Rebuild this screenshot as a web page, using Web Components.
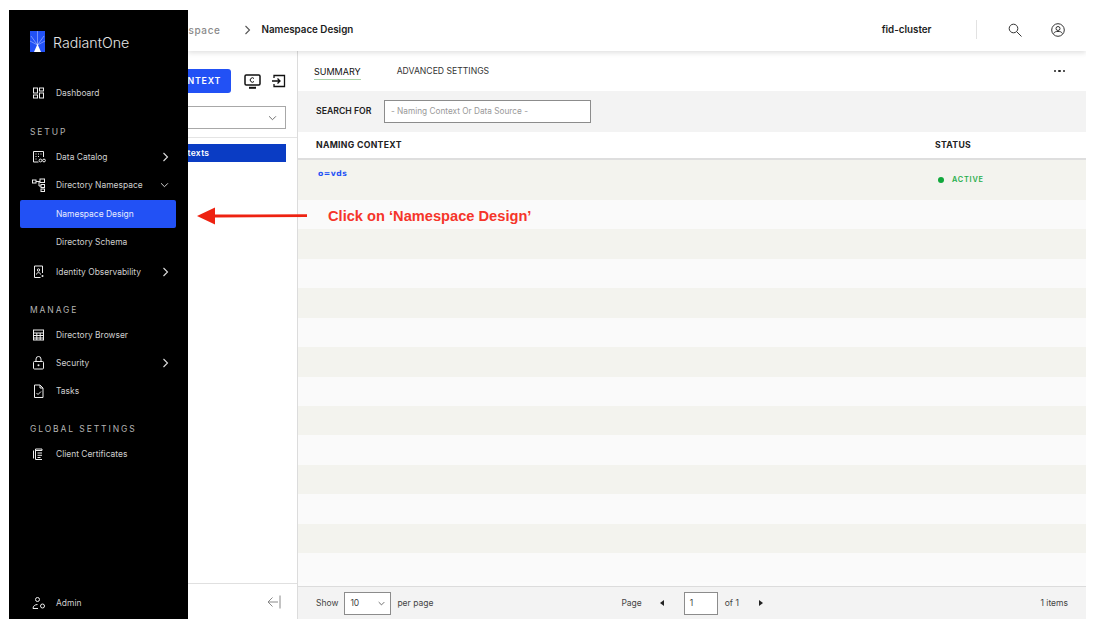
<!DOCTYPE html>
<html>
<head>
<meta charset="utf-8">
<title>Namespace Design</title>
<style>
  html, body { margin: 0; height: 629px; overflow: hidden; background: #fff; }
  body { font-family: Inter, "Liberation Sans", sans-serif; color: #1c1c1c; }
</style>
</head>
<body>
<app-shell>
  <side-nav slot="nav"></side-nav>
  <top-bar slot="top"></top-bar>
  <context-pane slot="left"></context-pane>
  <summary-pane slot="main"></summary-pane>
  <call-out slot="over">Click on ‘Namespace Design’</call-out>
</app-shell>

<script>
const icons = {
  dashboard: '<rect x="1.5" y="2" width="4" height="5"/><rect x="7.5" y="2" width="4" height="3"/><rect x="1.5" y="9" width="4" height="3"/><rect x="7.5" y="7" width="4" height="5"/>',
  catalog: '<path d="M6.500 12H1.500V1.500h10V7"/><path d="M3.500 4h1M6 4h1M8.500 4h1M3.500 6.500h1M6 6.500h1M3.500 9h1"/><circle cx="8.500" cy="10.500" r="1.400"/><circle cx="12" cy="10.500" r="1.400"/>',
  namespace: '<rect x=".5" y="2" width="3.500" height="3"/><rect x="8" y="1" width="4.500" height="3.500"/><rect x="9" y="6.500" width="3.500" height="3"/><rect x="9" y="11" width="3.500" height="2.500"/><path d="M4 3.500H8M7 3.500V8h2"/>',
  identity: '<path d="M10.500 8V1h-8v11.500h6"/><circle cx="6.500" cy="5" r="1.200"/><path d="M4.500 9.500c0-2.500 4-2.500 4 0"/><circle cx="10.500" cy="11" r="1" fill="currentColor" stroke="none"/>',
  table: '<rect x="1.500" y="2" width="10" height="10"/><path d="M1.500 5h10M1.500 7.500h10M1.500 10h10M4.800 5v7M8.200 5v7"/>',
  lock: '<rect x="1.500" y="5.500" width="10" height="7.500" rx="1"/><path d="M4 5.500V3a2.500 2.500 0 0 1 5 0v2.500"/><circle cx="6.500" cy="9.200" r="1" fill="currentColor" stroke="none"/>',
  tasks: '<path d="M2.500 1h5.500l3 3v9.500H2.500z"/><path d="M8 1v3h3M4.500 9l1.500 1.500L9 7.500"/>',
  certs: '<path d="M3.500 2V12.500h6.500M3.500 2h6.500v1.500H3.500M5.500 6h4.500M5.500 8.300h4.500M5.500 10.500h3M1.500 3.500v8"/>',
  admin: '<circle cx="5.500" cy="3.500" r="2"/><path d="M1 12.500c0-2.500 2-4 4.500-4M1 12.500h5"/><circle cx="10.500" cy="10" r="2"/>'
};
const chev = {
  right: '<svg width="7" height="10" viewBox="0 0 7 10" fill="none" stroke="currentColor" stroke-width="1.100"><path d="M1.500 1l4 4-4 4"/></svg>',
  down: '<svg width="9" height="6" viewBox="0 0 10 7" fill="none" stroke="currentColor" stroke-width="1.100"><path d="M1 1.500l4 4 4-4"/></svg>'
};

class AppShell extends HTMLElement {
  constructor() {
    super();
    this.attachShadow({mode: 'open'});
    this.shadowRoot.innerHTML = `
      <style>
        :host { display: block; position: relative; width: 1077px; height: 609px; margin: 10px 0 0 9px; overflow: hidden; }
        .frame { display: flex; height: 100%; }
        .right { flex: 1; display: flex; flex-direction: column; min-width: 0; }
        .body { flex: 1; display: flex; min-height: 0; }
      </style>
      <div class="frame">
        <slot name="nav"></slot>
        <div class="right">
          <slot name="top"></slot>
          <div class="body"><slot name="left"></slot><slot name="main"></slot></div>
        </div>
      </div>
      <slot name="over"></slot>`;
  }
}

class NavItem extends HTMLElement {
  constructor() {
    super();
    this.attachShadow({mode: 'open'});
    const icon = icons[this.getAttribute('icon')] || '';
    const c = this.getAttribute('chevron');
    this.shadowRoot.innerHTML = `
      <style>
        :host { display: flex; align-items: center; height: 28px; margin: 0 12px 0 11px; padding: 0 7px 0 12px;
                border-radius: 2px; font-size: 8.450px; color: #cfcfcf; }
        :host([active]) { background: #2251f5; color: #e8ecff; }
        .ic { width: 14px; height: 14px; margin-right: 10px; flex: none; color: #eee; }
        .lbl { flex: 1; white-space: nowrap; }
        .ch { display: flex; color: #ddd; }
      </style>
      <svg class="ic" viewBox="0 0 14 14" fill="none" stroke="currentColor" stroke-width="1">${icon}</svg>
      <span class="lbl"><slot></slot></span>
      <span class="ch">${c ? chev[c] : ''}</span>`;
  }
}

class NavSection extends HTMLElement {
  constructor() {
    super();
    this.attachShadow({mode: 'open'});
    this.shadowRoot.innerHTML = `
      <style>
        :host { display: block; height: 14px; line-height: 14px; margin: 17px 0 4px; padding-left: 21px;
                font-size: 8.500px; letter-spacing: 1.900px; color: #b4b4b4; }
      </style><slot></slot>`;
  }
}

class SideNav extends HTMLElement {
  constructor() {
    super();
    this.attachShadow({mode: 'open'});
    this.shadowRoot.innerHTML = `
      <style>
        :host { display: flex; flex-direction: column; flex: none; width: 178.500px; height: 100%; background: #000; position: relative; z-index: 3; }
        .logo { display: flex; align-items: center; height: 21px; margin: 21px 0 27px 21px; gap: 8px; color: #e6e6e6; font-size: 14.200px; font-weight: 300; }
        .logo span { padding-top: 2px; }
        .spacer { flex: 1; }
        .bottom { margin-bottom: 2px; }
      </style>
      <div class="logo">
        <svg width="15" height="21" viewBox="0 0 15 21">
          <rect width="15" height="21" fill="#2251f5"/>
          <path d="M7.500 14V0M7.500 14L1 5M7.500 14L14 5M7.500 14L0 10M7.500 14L15 10" stroke="#cfd9ff" stroke-width=".5"/>
          <path d="M7.500 13L11 21H4z" fill="#fff"/>
        </svg>
        <span>RadiantOne</span>
      </div>
      <nav-item icon="dashboard">Dashboard</nav-item>
      <nav-section style="margin-top:18px">SETUP</nav-section>
      <nav-item icon="catalog" chevron="right">Data Catalog</nav-item>
      <nav-item icon="namespace" chevron="down">Directory Namespace</nav-item>
      <nav-item active style="margin-top:1px">Namespace Design</nav-item>
      <nav-item>Directory Schema</nav-item>
      <nav-item icon="identity" chevron="right" style="margin-top:2px">Identity Observability</nav-item>
      <nav-section>MANAGE</nav-section>
      <nav-item icon="table">Directory Browser</nav-item>
      <nav-item icon="lock" chevron="right">Security</nav-item>
      <nav-item icon="tasks">Tasks</nav-item>
      <nav-section>GLOBAL SETTINGS</nav-section>
      <nav-item icon="certs">Client Certificates</nav-item>
      <div class="spacer"></div>
      <nav-item icon="admin" class="bottom">Admin</nav-item>`;
  }
}

class TopBar extends HTMLElement {
  constructor() {
    super();
    this.attachShadow({mode: 'open'});
    this.shadowRoot.innerHTML = `
      <style>
        :host { display: flex; align-items: center; box-sizing: border-box; height: 41px; padding-bottom: 2px; flex: none; background: #fff; box-shadow: 0 2px 5px rgba(0,0,0,.12); position: relative; z-index: 2; font-size: 10px; }
        .crumb { color: #8a8a8a; font-weight: 500; letter-spacing: .6px; margin-left: 1px; width: 55px; }
        .sep { width: 7px; height: 10px; margin-right: 11px; color: #555; display: flex; }
        .cur { font-weight: 600; color: #1c1c1c; font-size: 9.800px; }
        .cluster { margin-left: auto; font-weight: 600; font-size: 9.800px; }
        .div { width: 1px; height: 19px; background: #e2e2e2; margin: 0 31px 0 44.500px; }
        svg.i { color: #333; display: block; }
      </style>
      <span class="crumb">space</span>
      <span class="sep">${chev.right}</span>
      <span class="cur">Namespace Design</span>
      <span class="cluster">fid-cluster</span>
      <span class="div"></span>
      <svg class="i" width="14" height="14" viewBox="0 0 14 14" fill="none" stroke="currentColor" stroke-width="1"><circle cx="5.500" cy="5.500" r="4.300"/><path d="M8.700 8.700L13.500 13.500"/></svg>
      <svg class="i" width="14" height="14" viewBox="0 0 14 14" fill="none" stroke="currentColor" stroke-width="1" style="margin:0 21px 0 29px"><circle cx="7" cy="7" r="6.300"/><circle cx="7" cy="5.500" r="2"/><path d="M2.600 10.500c1-2 2.600-2 4.400-2s3.400 0 4.400 2"/></svg>`;
  }
}

class ContextPane extends HTMLElement {
  constructor() {
    super();
    this.attachShadow({mode: 'open'});
    this.shadowRoot.innerHTML = `
      <style>
        :host { display: flex; flex-direction: column; flex: none; width: 109px; height: 100%; background: #fff; border-right: 1px solid #dcdcdc; }
        .tools { display: flex; align-items: center; height: 24px; margin-top: 18px; }
        .btn { width: 31px; height: 24px; padding-right: 12.500px; background: #2251f5; color: #fff; border-radius: 0 3px 3px 0;
               font-size: 8.800px; font-weight: 600; letter-spacing: .8px; line-height: 24px; text-align: right; }
        .tools svg { display: block; color: #111; }
        .sel { display: flex; align-items: center; justify-content: flex-end; height: 21px; margin: 13px 11px 0 0; padding-right: 8px;
               border: 1px solid #a8a8a8; border-left: 0; color: #666; }
        hr { border: 0; border-top: 1px solid #e4e4e4; margin: 8px 0 6px; width: 100%; }
        .bar { height: 18px; margin-right: 11px; background: #0a3cc4; color: #fff; font-size: 8.500px; font-weight: 600; letter-spacing: .3px; line-height: 18px; }
        .grow { flex: 1; }
        .foot { display: flex; align-items: center; justify-content: flex-end; height: 35px; padding-right: 16px; border-top: 1px solid #e0e0e0; color: #888; }
      </style>
      <div class="tools">
        <span class="btn">NTEXT</span>
        <svg style="margin-left:12.500px" width="17" height="15" viewBox="0 0 17 15" fill="none" stroke="currentColor" stroke-width="1.500"><rect x="1" y="1" width="15" height="10" rx="1.200"/><path d="M5 13.800h7" stroke-width="2"/><path d="M10 4.500a2.200 2.200 0 1 0 0 3" stroke-width="1"/></svg>
        <svg style="margin-left:10px" width="15" height="14" viewBox="0 0 15 14" fill="none" stroke="currentColor" stroke-width="1.300"><path d="M3 4V1.500h10.500v11H3V10"/><path d="M1 7h8M6.500 4.500L9 7l-2.500 2.500"/></svg>
      </div>
      <div class="sel">${chev.down}</div>
      <hr>
      <div class="bar">texts</div>
      <div class="grow"></div>
      <div class="foot">
        <svg width="14" height="14" viewBox="0 0 14 14" fill="none" stroke="currentColor" stroke-width="1"><path d="M13 .5v13M11 7H1M5.500 2.500L1 7l4.500 4.500"/></svg>
      </div>`;
  }
}

class SummaryPane extends HTMLElement {
  constructor() {
    super();
    this.attachShadow({mode: 'open'});
    let rows = '';
    for (let i = 0; i < 13; i++) rows += '<div class="row"></div>';
    this.shadowRoot.innerHTML = `
      <style>
        :host { display: flex; flex-direction: column; flex: 1; min-width: 0; height: 100%; background: #fff; font-size: 9px; }
        .tabs { display: flex; align-items: center; height: 40px; flex: none; padding: 0 21px 0 16.500px; color: #333; }
        .tab { margin-right: 36px; padding: 3px 0 2px; }
        .tab.on { color: #111; border-bottom: 1px solid #a9d3a9; margin-top: 1px; }
        .tab.adv { font-size: 8.650px; padding-bottom: 3px; }
        .more { margin-left: auto; display: flex; gap: 2px; }
        .more i { width: 2.500px; height: 2.500px; background: #222; border-radius: 50%; }
        .search { display: flex; align-items: center; box-sizing: border-box; height: 41px; padding: 0 0 1px 18.500px; flex: none; background: #f3f3f3; }
        .search b { font-size: 8.700px; font-weight: 600; width: 68px; color: #222; }
        .input { width: 199px; height: 21px; line-height: 21px; padding-left: 6px; background: #fff; border: 1px solid #8c8c8c; color: #999; font-size: 8.250px; }
        .head { display: grid; grid-template-columns: 619px 1fr; align-items: center; height: 26px; flex: none; padding-left: 18.500px; border-bottom: 2px solid #dedede; font-weight: 700; font-size: 8.700px; letter-spacing: .3px; color: #222; }
        .first { display: grid; grid-template-columns: 619px 1fr; height: 40px; flex: none; padding-left: 18.500px; background: #f3f3ee; }
        .link { color: #2251f5; font-family: "DejaVu Sans", sans-serif; font-size: 7.700px; font-weight: 700; letter-spacing: .5px; padding: 9px 0 0 2px; }
        .status { display: flex; align-items: center; gap: 8px; padding: 0 0 1px 3px; color: #1fae4b; font-size: 7.300px; font-weight: 600; letter-spacing: .8px; }
        .status i { width: 6px; height: 6px; border-radius: 50%; background: #10a83c; }
        .rows { flex: 1; display: flex; flex-direction: column; min-height: 0; padding-bottom: 3.500px; background: #fbfbfb; }
        .row { flex: 1; background: #fafafa; }
        .row:nth-child(even) { background: #f3f3ee; }
        .pager { display: flex; align-items: center; height: 32px; flex: none; padding: 0 18px 0 18.500px; background: #f3f3f3; border-top: 1px solid #dcdcdc; font-size: 8.500px; color: #444; }
        .box { display: flex; align-items: center; height: 21px; padding: 0 5px; background: #fff; border: 1px solid #8c8c8c; }
        .tri { width: 0; height: 0; border-top: 3px solid transparent; border-bottom: 3px solid transparent; }
      </style>
      <div class="tabs">
        <span class="tab on">SUMMARY</span>
        <span class="tab adv">ADVANCED SETTINGS</span>
        <span class="more"><i></i><i></i><i></i></span>
      </div>
      <div class="search"><b>SEARCH FOR</b><div class="input">- Naming Context Or Data Source -</div></div>
      <div class="head"><span>NAMING CONTEXT</span><span>STATUS</span></div>
      <div class="first">
        <span class="link">o=vds</span>
        <span class="status"><i></i>ACTIVE</span>
      </div>
      <div class="rows">${rows}</div>
      <div class="pager">
        <span>Show</span>
        <span class="box" style="margin-left:6px;width:35px;justify-content:space-between">10 ${chev.down.replace('width="9"','width="7"').replace('height="6"','height="5"')}</span>
        <span style="margin-left:6px">per page</span>
        <span style="margin-left:188px">Page</span>
        <span class="tri" style="margin-left:18px;border-right:4px solid #222"></span>
        <span class="box" style="margin-left:20px;width:22px">1</span>
        <span style="margin-left:7px">of 1</span>
        <span class="tri" style="margin-left:20px;border-left:4px solid #222"></span>
        <span style="margin-left:auto">1 items</span>
      </div>`;
  }
}

class CallOut extends HTMLElement {
  constructor() {
    super();
    this.attachShadow({mode: 'open'});
    this.shadowRoot.innerHTML = `
      <style>
        :host { position: absolute; left: 188px; top: 194px; display: flex; align-items: center; height: 24px; z-index: 4;
                font-family: "Liberation Sans", Arial, sans-serif; font-weight: 700; font-size: 14.650px; color: #f5352a; }
        svg { display: block; margin-right: 21px; }
      </style>
      <svg width="110" height="20" viewBox="0 0 110 20"><path d="M0 10L18 1.500V8.500L110 8.300V11L18 11.500V18.500z" fill="#ee2211"/></svg>
      <span><slot></slot></span>`;
  }
}

customElements.define('nav-item', NavItem);
customElements.define('nav-section', NavSection);
customElements.define('side-nav', SideNav);
customElements.define('top-bar', TopBar);
customElements.define('context-pane', ContextPane);
customElements.define('summary-pane', SummaryPane);
customElements.define('call-out', CallOut);
customElements.define('app-shell', AppShell);
</script>
</body>
</html>
